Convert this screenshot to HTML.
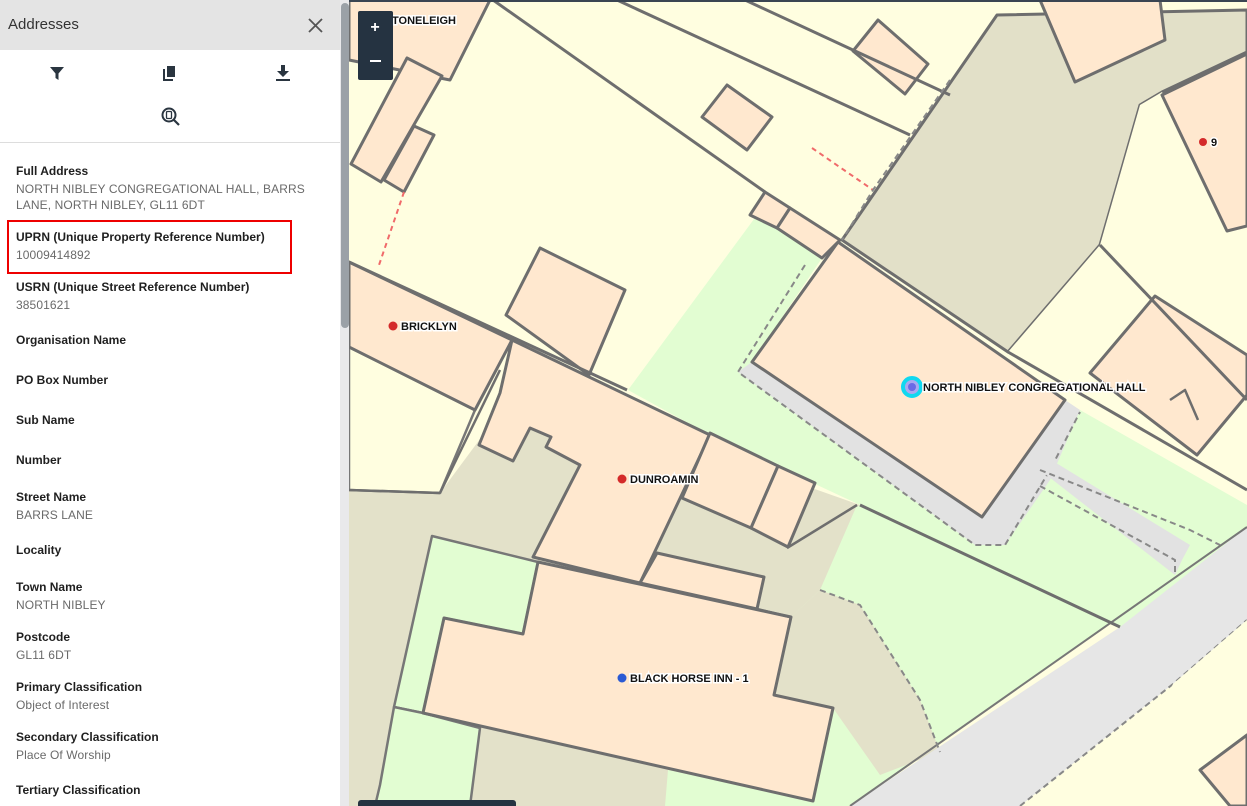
<!DOCTYPE html>
<html><head><meta charset="utf-8"><style>
*{margin:0;padding:0;box-sizing:border-box}
body{width:1247px;height:806px;overflow:hidden;position:relative;font-family:"Liberation Sans",Arial,sans-serif;background:#fffee0}
#map{position:absolute;left:0;top:0}
#panel{position:absolute;left:0;top:0;width:340px;height:806px;background:#fff}
#hdr{height:50px;background:#e4e4e4;position:relative}
#hdr span{position:absolute;left:8px;top:16px;font-size:15px;color:#333}
.f{position:absolute;left:16px;font-size:12px;line-height:16px}
.l{font-weight:bold;color:#1f1f1f}
.v{color:#6a6a6a;letter-spacing:0.1px}
#sb{position:absolute;left:340px;top:0;width:9px;height:806px;background:#e9e9eb}
#thumb{position:absolute;left:341px;top:3px;width:8px;height:325px;background:#9ba1a7;border-radius:4px}
.lab{font-family:"Liberation Sans",Arial,sans-serif;font-weight:bold;font-size:11px;fill:#111;stroke:#fff;stroke-width:3px;paint-order:stroke}
</style></head><body>
<svg id="map" width="1247" height="806" viewBox="0 0 1247 806">
<g stroke="#6e6e6e" stroke-width="3" stroke-linejoin="round">
<polygon fill="#e3e1c9" stroke="none" points="349,480 440,493 520,385 860,505 860,806 349,806"/>
<polygon fill="#fffee0" stroke="#777" stroke-width="2.5" points="349,347 475,410 440,493 349,490"/>
<polygon fill="#e2fdd2" stroke="none" points="628,390 757,215 822,258 752,362 980,545 1000,545 1050,470 1080,410 1247,505 1247,530 1120,627 860,505 710,435"/>
<!-- lower green -->
<polygon fill="#e2fdd2" stroke="none" points="788,547 860,505 1120,627 1247,527 850,806 665,806 668,770 813,801 833,708 774,695 791,617"/>
<polygon fill="#e3e1c9" stroke="none" points="791,617 820,590 860,605 920,700 940,752 880,775 833,708 774,695"/>
<polygon fill="#e3e1c9" stroke="none" points="657,553 680,498 751,528 788,547 857,505 820,590 791,617 764,577"/>
<polygon fill="#e2e2e2" stroke="none" points="752,362 738,372 975,545 1005,545 1050,480 1080,410 1065,400 982,517"/>
<polyline fill="none" stroke="#888" stroke-width="2" stroke-dasharray="6,4" points="805,265 738,372 975,545 1005,545 1050,470 1080,412"/>
<polygon fill="#e2e2e2" stroke="none" points="1040,470 1048,458 1190,545 1182,560 1175,575"/>
<polyline fill="none" stroke="#888" stroke-width="2" stroke-dasharray="6,4" points="1040,470 1190,530 1220,545"/>
<polyline fill="none" stroke="#888" stroke-width="2" stroke-dasharray="6,4" points="1040,486 1175,560 1175,575"/>
<polygon fill="#e6e6e6" stroke="none" points="850,806 1120,627 1247,527 1247,620 1173,684 1020,806"/>
<line x1="850" y1="806" x2="1247" y2="527" stroke="#777" stroke-width="2"/>
<polyline fill="none" stroke="#888" stroke-width="2" stroke-dasharray="6,4" points="1020,806 1173,684 1247,620"/>
<polygon fill="#fffee0" stroke="none" points="1173,684 1247,620 1247,806 1110,806"/>
<polygon fill="#ffe8cf" points="1200,770 1247,735 1247,806 1230,806"/>
<polygon fill="#e2e0c8" points="842,240 997,15 1247,10 1247,52 1162,92 1140,105 1100,245 1008,352"/>
<polygon fill="#fffee0" stroke="none" points="1008,352 1100,245 1140,105 1162,92 1227,231 1247,228 1247,300 1155,296 1090,373"/>
<polygon fill="#ffe8cf" points="838,242 1065,400 982,517 752,362"/>
<polygon fill="#ffe8cf" points="1162,95 1247,54 1247,226 1227,231"/>
<polygon fill="#ffe8cf" points="1090,373 1155,296 1247,355 1247,395 1197,455"/>
<polyline fill="none" points="1170,400 1185,390 1198,420" stroke-width="2.5"/>
<polygon fill="#ffe8cf" points="1040,0 1160,0 1165,40 1075,82"/>
<polygon fill="#ffe8cf" points="853,51 878,20 928,64 905,94"/>
<polygon fill="#ffe8cf" points="702,117 727,85 772,117 747,150"/>
<polygon fill="#ffe8cf" points="349,0 490,0 450,80 349,60"/>
<polygon fill="#ffe8cf" points="407,58 442,76 381,182 351,164"/>
<polygon fill="#ffe8cf" points="414,126 434,135 404,192 384,180"/>
<polygon fill="#ffe8cf" points="540,248 625,290 589,375 506,315"/>
<polygon fill="#ffe8cf" points="765,192 790,208 777,228 750,215"/>
<polygon fill="#ffe8cf" points="790,208 840,240 822,258 777,228"/>
<polygon fill="#ffe8cf" points="349,262 512,340 475,410 349,347"/>
<polygon fill="#ffe8cf" points="512,340 710,435 640,583 533,557 580,465 546,447 551,437 530,428 513,461 479,445 500,393"/>
<polygon fill="#ffe8cf" points="710,433 778,466 751,528 682,498"/>
<polygon fill="#ffe8cf" points="778,466 815,483 788,547 751,528"/>
<polygon fill="#ffe8cf" points="657,553 764,577 757,609 640,583"/>
<polygon fill="#e2fdd2" stroke="#777" stroke-width="2.5" points="432,536 538,562 523,634 444,618 423,713 394,707"/>
<polygon fill="#e2fdd2" stroke="#777" stroke-width="2.5" points="394,707 423,713 480,728 470,806 375,806 380,785"/>
<polygon fill="#ffe8cf" points="538,562 791,617 774,695 833,708 813,801 423,713 444,618 523,634"/>
<line x1="493" y1="0" x2="765" y2="192"/>
<line x1="617" y1="0" x2="910" y2="135"/>
<line x1="745" y1="0" x2="950" y2="95"/>
<line x1="349" y1="262" x2="627" y2="390"/>
<line x1="1008" y1="352" x2="1247" y2="490"/>
<line x1="1100" y1="245" x2="1247" y2="400"/>
<line x1="860" y1="505" x2="1120" y2="627"/>
<line x1="349" y1="490" x2="440" y2="493" stroke-width="2.5"/>
<line x1="440" y1="493" x2="500" y2="370" stroke-width="2.5"/>
<line x1="787" y1="548" x2="857" y2="505" stroke-width="2.5"/>
<line x1="757" y1="609" x2="790" y2="617" stroke-width="2.5"/>
<polyline fill="none" stroke="#f06a6a" stroke-width="2" stroke-dasharray="5,4" points="404,192 378,268"/>
<polyline fill="none" stroke="#f06a6a" stroke-width="2" stroke-dasharray="5,4" points="812,148 873,190"/>
<polyline fill="none" stroke="#888" stroke-width="2" stroke-dasharray="6,4" points="950,80 873,190 842,240"/>
<polyline fill="none" stroke="#888" stroke-width="2" stroke-dasharray="6,4" points="820,590 860,605 920,700 940,752"/>
</g>
<circle cx="393" cy="326" r="4.5" fill="#d42a2a"/><text class="lab" x="401" y="330">BRICKLYN</text>
<circle cx="622" cy="479" r="4.5" fill="#d42a2a"/><text class="lab" x="630" y="483">DUNROAMIN</text>
<circle cx="622" cy="678" r="4.5" fill="#2a5ad4"/><text class="lab" x="630" y="682">BLACK HORSE INN - 1</text>
<circle cx="1203" cy="142" r="4" fill="#d42a2a"/><text class="lab" x="1211" y="146">9</text>
<text class="lab" x="392" y="24">TONELEIGH</text>
<circle cx="912" cy="387" r="9" fill="#a9a9f0" stroke="#10d8f0" stroke-width="4"/>
<circle cx="912" cy="387" r="4" fill="#6a6ae6"/>
<text class="lab" x="923" y="391">NORTH NIBLEY CONGREGATIONAL HALL</text>
<rect x="358" y="11" width="35" height="69" rx="2" fill="#253341"/>
<text x="375" y="32" fill="#fff" font-size="16" font-weight="bold" text-anchor="middle" font-family="Liberation Sans">+</text>
<rect x="370" y="60" width="11" height="2" fill="#fff"/>
<rect x="358" y="800" width="158" height="10" rx="3" fill="#253341"/>
<rect x="0" y="0" width="1247" height="2" fill="#3a4552"/>
</svg>
<div id="panel">
<div id="hdr"><span>Addresses</span>
<svg style="position:absolute;left:308px;top:18px" width="15" height="15"><path d="M1 1L14 14M14 1L1 14" stroke="#555" stroke-width="1.8"/></svg></div>
<svg style="position:absolute;left:49px;top:65px" width="16" height="16"><path d="M1 2H15L9.5 8.5V15L6.5 13V8.5Z" fill="#2a3540"/></svg>
<svg style="position:absolute;left:162px;top:64px" width="16" height="18"><path d="M5 2H13V13H5Z" fill="#2a3540"/><path d="M2 5V16H11" fill="none" stroke="#2a3540" stroke-width="2"/></svg>
<svg style="position:absolute;left:275px;top:64px" width="16" height="18"><path d="M6 1H10V7H14L8 13L2 7H6Z" fill="#2a3540"/><rect x="1" y="15" width="14" height="2" fill="#2a3540"/></svg>
<svg style="position:absolute;left:160px;top:106px" width="22" height="22"><circle cx="9" cy="9" r="6.5" fill="none" stroke="#2a3540" stroke-width="2"/><rect x="6.5" y="5.5" width="5" height="7" rx="1" fill="none" stroke="#2a3540" stroke-width="1.3"/><path d="M14 14L19 19" stroke="#2a3540" stroke-width="2.2"/></svg>
<div style="position:absolute;left:0;top:142px;width:340px;height:1px;background:#ddd"></div>
<div class="f l" style="top:163px">Full Address</div>
<div class="f v" style="top:181px;width:300px;line-height:16px">NORTH NIBLEY CONGREGATIONAL HALL, BARRS LANE, NORTH NIBLEY, GL11 6DT</div>
<div style="position:absolute;left:7px;top:220px;width:285px;height:54px;border:2px solid #ee0000"></div>
<div class="f l" style="top:229px">UPRN (Unique Property Reference Number)</div>
<div class="f v" style="top:247px">10009414892</div>
<div class="f l" style="top:279px">USRN (Unique Street Reference Number)</div>
<div class="f v" style="top:297px">38501621</div>
<div class="f l" style="top:332px">Organisation Name</div>
<div class="f l" style="top:372px">PO Box Number</div>
<div class="f l" style="top:412px">Sub Name</div>
<div class="f l" style="top:452px">Number</div>
<div class="f l" style="top:489px">Street Name</div>
<div class="f v" style="top:507px">BARRS LANE</div>
<div class="f l" style="top:542px">Locality</div>
<div class="f l" style="top:579px">Town Name</div>
<div class="f v" style="top:597px">NORTH NIBLEY</div>
<div class="f l" style="top:629px">Postcode</div>
<div class="f v" style="top:647px">GL11 6DT</div>
<div class="f l" style="top:679px">Primary Classification</div>
<div class="f v" style="top:697px">Object of Interest</div>
<div class="f l" style="top:729px">Secondary Classification</div>
<div class="f v" style="top:747px">Place Of Worship</div>
<div class="f l" style="top:782px">Tertiary Classification</div>
</div>
<div id="sb"></div><div id="thumb"></div>
</body></html>
